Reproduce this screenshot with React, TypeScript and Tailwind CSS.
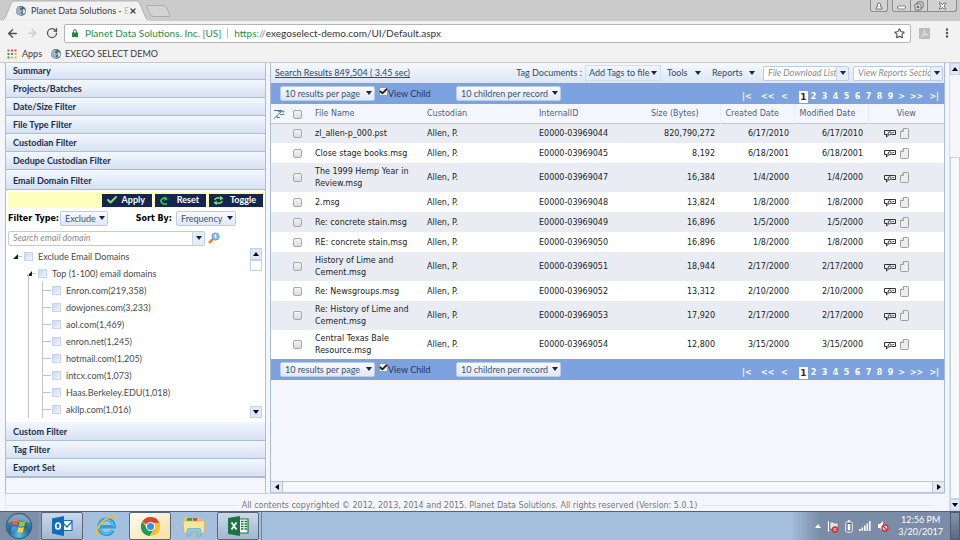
import * as React from "react"
import { ArrowLeft, ArrowRight, RotateCw, Star, X, Check, MoreVertical } from "lucide-react"
import { clsx } from "clsx"

const UI_FONT = "font-['Lato','Open_Sans',sans-serif]"
const GRID_FONT = "font-['DejaVu_Sans',sans-serif]"

const domains = [
  "Enron.com(219,358)",
  "dowjones.com(3,233)",
  "aol.com(1,469)",
  "enron.net(1,245)",
  "hotmail.com(1,205)",
  "intcx.com(1,073)",
  "Haas.Berkeley.EDU(1,018)",
  "akllp.com(1,016)",
]

const rows = [
  { name: "zl_allen-p_000.pst", id: "E0000-03969044", size: "820,790,272", date: "6/17/2010" },
  { name: "Close stage books.msg", id: "E0000-03969045", size: "8,192", date: "6/18/2001" },
  { name: "The 1999 Hemp Year in Review.msg", id: "E0000-03969047", size: "16,384", date: "1/4/2000", tall: true },
  { name: "2.msg", id: "E0000-03969048", size: "13,824", date: "1/8/2000" },
  { name: "Re: concrete stain.msg", id: "E0000-03969049", size: "16,896", date: "1/5/2000" },
  { name: "RE: concrete stain.msg", id: "E0000-03969050", size: "16,896", date: "1/8/2000" },
  { name: "History of Lime and Cement.msg", id: "E0000-03969051", size: "18,944", date: "2/17/2000", tall: true },
  { name: "Re: Newsgroups.msg", id: "E0000-03969052", size: "13,312", date: "2/10/2000" },
  { name: "Re: History of Lime and Cement.msg", id: "E0000-03969053", size: "17,920", date: "2/17/2000", tall: true },
  { name: "Central Texas Bale Resource.msg", id: "E0000-03969054", size: "12,800", date: "3/15/2000", tall: true },
]

function Caret({ className = "fill-[#14264f]" }: { className?: string }) {
  return (
    <svg viewBox="0 0 6 4" className={clsx("h-1 w-1.5 shrink-0", className)} aria-hidden="true">
      <path d="M0 0h6L3 4z" />
    </svg>
  )
}

function GlobeLogo() {
  return (
    <svg viewBox="0 0 12 12" className="h-3 w-3 shrink-0" aria-hidden="true">
      <circle cx="6" cy="6" r="5" fill="#4a6478" />
      <path d="M1 5c1-3 4-4 7-3-2 0-3 1-3 2s2 1 2 2-2 2-1 4C3 10 1 8 1 5z" fill="#9fb3c3" />
      <path d="M8 4c2 0 3 2 2 4-1 1-2 1-2 0s-1-2 0-4z" fill="#d4dee6" />
      <path d="M2 10c3 1 6 0 8-4" stroke="#eef3f7" strokeWidth=".7" fill="none" />
    </svg>
  )
}

function Select({ label, value, className }: { label: string; value: string; className: string }) {
  return (
    <div className={clsx("relative h-[15px] shrink-0", className)}>
      <select
        aria-label={label}
        className="block h-full w-full appearance-none rounded-[2px] border border-[#bccce3] bg-linear-to-b from-[#f8fafe] to-[#dfe8f6] pl-1 text-[9px] leading-3 text-[#3d5275]"
      >
        <option>{value}</option>
      </select>
      <Caret className="pointer-events-none absolute top-[5px] right-[3px] fill-[#14264f]" />
    </div>
  )
}

function Combo({ placeholder, className }: { placeholder: string; className: string }) {
  return (
    <div className={clsx("flex h-[15px] rounded-[2px] border border-[#bccce3] bg-white", className)}>
      <input
        type="text"
        aria-label={placeholder}
        placeholder={placeholder}
        className="min-w-0 flex-1 pl-1 text-[9px] italic placeholder:text-[#8e8e8e]"
      />
      <button
        type="button"
        aria-label={"Open " + placeholder}
        className="flex w-3 items-center justify-center border-l border-[#c8d6ea] bg-[#e6eef9]"
      >
        <Caret />
      </button>
    </div>
  )
}

function GridCheck({ label }: { label: string }) {
  return (
    <input
      type="checkbox"
      aria-label={label}
      className="block h-[9px] w-[9px] appearance-none rounded-[2px] border border-[#a9a9a9] bg-linear-to-b from-[#f4f4f4] to-[#dcdcdc]"
    />
  )
}

function BrowserChrome() {
  return (
    <header className={clsx("shrink-0", UI_FONT)}>
      <div className="flex h-[21px] items-start justify-between bg-[#cbcbcb]">
        <div className="flex h-full">
          <div className="relative h-full w-[150px]">
            <svg viewBox="0 0 150 21" className="absolute inset-0 h-full w-full" aria-hidden="true">
              <path d="M0 21C4 20 4 19 6 16L11 4q1-3 3-3H136q3 0 4 3l5 12q2 5 5 5z" fill="#f2f2f2" stroke="#a9a9a9" strokeWidth=".8" />
              <path d="M0 21h150" stroke="#f2f2f2" strokeWidth="1.5" />
            </svg>
            <div className="relative flex h-full items-center pl-[15px]">
              <GlobeLogo />
              <span className="ml-1 w-[94px] text-[9px] whitespace-nowrap text-[#3c3c3c]">
                Planet Data Solutions - <span className="text-[#bbb]">E</span>
              </span>
              <button type="button" aria-label="Close tab" className="ml-1">
                <X className="h-2 w-2 text-[#444]" strokeWidth={4} />
              </button>
            </div>
          </div>
          <button type="button" aria-label="New tab" className="-ml-1 h-full">
            <svg viewBox="0 0 26 21" className="h-[21px] w-[26px]" aria-hidden="true">
              <path d="M2 5.500h15.500q2 0 3 2l3.500 8q0 1-1 1H7q-2 0-3-2L1 7q0-1.500 1-1.500z" fill="#d3d3d3" stroke="#a2a2a2" strokeWidth=".8" />
            </svg>
          </button>
        </div>
        <div className="mr-[3px] flex h-3 gap-1">
          <button type="button" aria-label="Profile" className="flex w-[18px] items-center justify-center rounded-b-[3px] border border-t-0 border-[#8e8e8e] bg-[#d2d2d2]">
            <svg viewBox="0 0 8 8" className="h-2 w-2" fill="#fff" stroke="#555" strokeWidth=".8">
              <path d="M1 7V6q0-1.200 2-1.500Q2.300 4 2.300 2.800 2.500 1 4 1t1.700 1.800Q5.700 4 5 4.500 7 4.800 7 6v1z" />
            </svg>
          </button>
          <div className="flex rounded-b-[3px] border border-t-0 border-[#8e8e8e] bg-[#d2d2d2]">
            <button type="button" aria-label="Minimize" className="flex w-[17px] items-center justify-center">
              <svg viewBox="0 0 9 8" className="h-2 w-[9px]" fill="#fff" stroke="#666" strokeWidth=".8">
                <rect x=".5" y="4" width="8" height="3" rx="1" />
              </svg>
            </button>
            <button type="button" aria-label="Restore" className="flex w-[18px] items-center justify-center border-x border-[#8e8e8e]">
              <svg viewBox="0 0 10 10" className="h-2.5 w-2.5" fill="#eee" stroke="#555" strokeWidth=".9">
                <rect x="3" y="1" width="6" height="6" rx="1" />
                <rect x="1" y="3" width="6" height="6" rx="1" />
                <rect x="3.200" y="5.200" width="1.600" height="1.600" />
              </svg>
            </button>
            <button type="button" aria-label="Close window" className="flex w-7 items-center justify-center">
              <svg viewBox="0 0 9 8" className="h-2 w-[9px]" fill="#fff" stroke="#555" strokeWidth=".8">
                <path d="M1 1h2l1.500 1.700L6 1h2L6 4l2 3H6L4.500 5.300 3 7H1l2-3z" />
              </svg>
            </button>
          </div>
        </div>
      </div>

      <div className="flex h-6 items-center bg-[#f2f2f2] pr-[7px] pl-1.5">
        <button type="button" aria-label="Back" className="w-5">
          <ArrowLeft className="h-[13px] w-[13px] text-[#505050]" strokeWidth={2.5} />
        </button>
        <button type="button" aria-label="Forward" className="w-5">
          <ArrowRight className="h-3 w-3 text-[#c9c9c9]" strokeWidth={2.5} />
        </button>
        <button type="button" aria-label="Reload" className="w-[18px]">
          <RotateCw className="h-3 w-3 text-[#505050]" strokeWidth={2.5} />
        </button>
        <div className="flex h-[19px] min-w-0 flex-1 items-center rounded-[2px] border border-[#b5b5b5] bg-white pr-[5px] pl-[7px] text-[10px] whitespace-nowrap">
          <svg viewBox="0 0 6 8" className="h-2 w-1.5" role="img" aria-label="Secure">
            <path d="M1.500 4V2.300Q1.500.8 3 .8t1.500 1.500V4" fill="none" stroke="#1c8a3f" />
            <path d="M0 3.500h6V8H0z" fill="#1c8a3f" />
          </svg>
          <span className="ml-[7px] text-[#2c8a4b]">Planet Data Solutions. Inc. [US]</span>
          <span className="mx-1.5 h-2.5 w-px bg-[#bbb]" />
          <span className="text-[#2c8a4b]">https</span>
          <span className="text-[#888]">://</span>
          <input
            type="text"
            aria-label="Address"
            defaultValue="exegoselect-demo.com/UI/Default.aspx"
            className="min-w-0 flex-1 bg-transparent text-[#333]"
          />
          <button type="button" aria-label="Bookmark this page">
            <Star className="h-[11px] w-[11px] text-[#555]" strokeWidth={2.5} />
          </button>
        </div>
        <button type="button" aria-label="PDF extension" className="ml-2 flex h-[11px] w-[11px] items-center justify-center bg-[#bdbdbd]">
          <svg viewBox="0 0 10 10" className="h-[9px] w-[9px]" fill="none" stroke="#e9e9e9" strokeWidth="1">
            <path d="M1.500 8.500C4 6.500 5 4 4.800 1.500 5 5 7 6.500 9 6.500 6 6 4 6.500 1.500 8.500z" />
          </svg>
        </button>
        <button type="button" aria-label="Menu" className="ml-[11px]">
          <MoreVertical className="h-3 w-3 text-[#505050]" strokeWidth={3} />
        </button>
      </div>

      <nav className="flex h-[18px] items-center border-b border-[#c4c7cc] bg-[#f2f2f2] pl-[7px] text-[9px] text-[#3a3a3a]">
        <svg viewBox="0 0 10 10" className="h-2.5 w-2.5" aria-hidden="true">
          <path d="M.5.500h2v2h-2zM4 .5h2v2H4zM7.500.500h2v2h-2z" fill="#e5483b" />
          <path d="M.5 4h2v2h-2z" fill="#28a058" />
          <path d="M4 4h2v2H4z" fill="#3f7ee8" />
          <path d="M7.500 4h2v2h-2zM4 7.500h2v2H4zM7.500 7.500h2v2h-2z" fill="#f3b81d" />
          <path d="M.5 7.500h2v2h-2z" fill="#28a058" />
        </svg>
        <a href="#apps" className="ml-[5px]">Apps</a>
        <a href="#exego" className="ml-2 flex items-center gap-[3px]">
          <GlobeLogo />
          EXEGO SELECT DEMO
        </a>
      </nav>
    </header>
  )
}

function PanelHeader({ title, className = "h-[18px]" }: { title: string; className?: string }) {
  return (
    <button
      type="button"
      className={clsx(
        "block w-full border-b border-[#a9bddb] bg-linear-to-b from-[#f3f8fe] to-[#d6e1f2] pl-[7px] text-left text-[9px] leading-4 font-bold text-[#1b2c4f]",
        className
      )}
    >
      {title}
    </button>
  )
}

function ActionButton({ label, children, className }: { label: string; children: React.ReactNode; className: string }) {
  return (
    <button type="button" className={clsx("flex h-[13px] items-center justify-between bg-[#14264f] pr-[7px] pl-1 text-[9px] font-bold text-white", className)}>
      {children}
      {label}
    </button>
  )
}

function TreeItem({ label, level }: { label: string; level: number }) {
  const leaf = level === 2
  return (
    <li className={clsx("flex h-[17px] items-center", leaf ? "ml-7" : level === 1 ? "ml-3.5" : "ml-0")}>
      {leaf ? (
        <span className="h-[17px] w-2.5 border-l border-[#c3c3c3] pt-2">
          <span className="block h-px w-2 bg-[#c3c3c3]" />
        </span>
      ) : (
        <span className="flex w-2.5 items-center">
          <svg viewBox="0 0 5 5" className="-ml-px h-[5px] w-[5px]" aria-hidden="true">
            <path d="M5 0v5H0z" fill="#222" />
          </svg>
          <span className="h-px w-1 bg-[#c3c3c3]" />
        </span>
      )}
      <label className="flex items-center gap-[5px] text-[9px] whitespace-nowrap text-[#4b4b4b]">
        <input type="checkbox" className="h-[9px] w-[9px] appearance-none border border-[#c5d5ea] bg-linear-to-br from-[#c9d9ee] to-[#f1f6fc]" />
        {label}
      </label>
    </li>
  )
}

function FilterSidebar() {
  return (
    <aside className={clsx("flex w-[261px] shrink-0 flex-col border-x border-[#a9bddb]", UI_FONT)}>
      <PanelHeader title="Summary" className="h-[17px]" />
      <PanelHeader title="Projects/Batches" />
      <PanelHeader title="Date/Size Filter" />
      <PanelHeader title="File Type Filter" />
      <PanelHeader title="Custodian Filter" />
      <PanelHeader title="Dedupe Custodian Filter" />
      <PanelHeader title="Email Domain Filter" className="h-5 pt-0.5" />
      <div className="bg-white px-0.5 pt-0.5 pb-1">
        <div className="flex h-4 items-center justify-end gap-[3px] bg-[#ffffbd]">
          <ActionButton label="Apply" className="w-[50px]">
            <Check className="h-3 w-3 text-[#7dea4c]" strokeWidth={4} />
          </ActionButton>
          <ActionButton label="Reset" className="w-[51px]">
            <svg viewBox="0 0 12 12" className="h-2.5 w-2.5" fill="none" stroke="#27d33a" strokeWidth="2">
              <path d="M9.500 10.500C4 12 1 8 3 5.500 4.500 3.500 7 3.500 9 4.500" />
              <path d="M7 1.500l3.500 3.200L6.500 7z" fill="#27d33a" stroke="none" />
            </svg>
          </ActionButton>
          <ActionButton label="Toggle" className="w-[54px]">
            <svg viewBox="0 0 12 12" className="h-[11px] w-[11px]" fill="none" stroke="#6fe65a" strokeWidth="1.600">
              <path d="M2 5.500C2.500 3 5 2.500 9 3.500M10 6.500C9.500 9 7 9.500 3 8.500" />
              <path d="M8 .8l3.500 3L7.500 6zM4 6L.5 8.500 4 11.200z" fill="#6fe65a" stroke="none" />
            </svg>
          </ActionButton>
        </div>
        <div className={clsx("flex h-[21px] items-center text-[8px] font-bold text-black", GRID_FONT)}>
          <span className="w-[52px] whitespace-nowrap">Filter Type:</span>
          <Select label="Filter type" value="Exclude" className={clsx("w-12 font-normal", UI_FONT)} />
          <span className="w-[68px] pr-1 text-right whitespace-nowrap">Sort By:</span>
          <Select label="Sort by" value="Frequency" className={clsx("w-[60px] font-normal", UI_FONT)} />
        </div>
        <div className="flex h-[18px] items-center gap-[3px]">
          <Combo placeholder="Search email domain" className="w-[197px]" />
          <button type="button" aria-label="Search domains">
            <svg viewBox="0 0 12 12" className="h-3 w-3">
              <path d="M1 11l4-4" stroke="#e8862a" strokeWidth="2.500" />
              <circle cx="7.500" cy="4.500" r="3.600" fill="#8fc4ea" stroke="#4a8dc4" strokeWidth=".8" />
              <path d="M7.500 3v3M6.500 3.500l1-1" stroke="#fff" />
            </svg>
          </button>
        </div>
        <div className="flex justify-between pt-px">
          <div className="relative pl-1.5">
            <span className="absolute top-[26px] bottom-0 left-5 w-px bg-[#c3c3c3]" />
            <ul>
              <TreeItem label="Exclude Email Domains" level={0} />
              <TreeItem label="Top (1-100) email domains" level={1} />
              {domains.map((d) => (
                <TreeItem key={d} label={d} level={2} />
              ))}
            </ul>
          </div>
          <div className="mr-px flex w-3 flex-col items-stretch">
            <button type="button" aria-label="Scroll up" className="flex h-3 items-center justify-center border border-[#c3d3e9] bg-[#dfe8f6]">
              <Caret className="rotate-180 fill-black" />
            </button>
            <span className="h-[11px] border border-[#c3d3e9] bg-white" />
            <button type="button" aria-label="Scroll down" className="mt-auto flex h-3 items-center justify-center border border-[#c3d3e9] bg-[#dfe8f6]">
              <Caret className="fill-black" />
            </button>
          </div>
        </div>
      </div>
      <PanelHeader title="Custom Filter" className="h-[19px] pt-px" />
      <PanelHeader title="Tag Filter" />
      <PanelHeader title="Export Set" className="h-[19px] border-b-2" />
    </aside>
  )
}

function PagerBar({ place }: { place: string }) {
  return (
    <div className="flex h-[21px] items-center justify-between bg-[#7da2e0] pr-[5px] pl-[9px]">
      <div className={clsx("flex items-center", UI_FONT)}>
        <Select label={"Results per page " + place} value="10 results per page" className="w-[95px]" />
        <label className="ml-1 flex items-center text-[9px] text-[#23375f]">
          <span className="relative mb-1 h-[9px] w-[9px]">
            <input type="checkbox" defaultChecked className="block h-[9px] w-[9px] appearance-none border border-[#9a9a9a] bg-[#f2f2f2]" />
            <Check className="pointer-events-none absolute inset-0 h-[9px] w-[9px] text-[#222]" strokeWidth={5} />
          </span>
          <span className="w-10 whitespace-nowrap">View Child</span>
        </label>
        <Select label={"Children per record " + place} value="10 children per record" className="ml-7 w-[105px]" />
      </div>
      <nav aria-label={"Pages " + place} className={clsx("flex items-center pt-1.5 text-[8px] leading-3 font-bold text-white", GRID_FONT)}>
        <button type="button" className="w-[19px] text-left">|&lt;</button>
        <button type="button" className="w-5 text-left">&lt;&lt;</button>
        <button type="button" className="w-[18px] text-left">&lt;</button>
        <button type="button" aria-current="page" className="w-[9px] bg-white text-[9px] text-[#5b1a1a]">1</button>
        {[2, 3, 4, 5, 6, 7, 8, 9].map((n) => (
          <button key={n} type="button" className="w-[11px]">{n}</button>
        ))}
        <button type="button" className="w-[11px]">&gt;</button>
        <button type="button" className="w-[19px]">&gt;&gt;</button>
        <button type="button" className="w-[13px] text-right">&gt;|</button>
      </nav>
    </div>
  )
}

function ResultsTable() {
  return (
    <table className={clsx("w-full table-fixed border-collapse bg-white text-[8px] leading-3 text-[#222]", GRID_FONT)}>
      <colgroup>
        <col className="w-4" />
        <col className="w-[22px]" />
        <col className="w-28" />
        <col className="w-28" />
        <col className="w-28" />
        <col className="w-[75px]" />
        <col className="w-[74px]" />
        <col className="w-[74px]" />
        <col />
      </colgroup>
      <thead>
        <tr className="h-[19px] border-b border-[#b9cade] bg-[#f3f7fd] text-left text-[#4c6185] [&>th]:pt-0.5 [&>th]:font-normal">
          <th className="pl-0.5">
            <svg viewBox="0 0 12 10" className="h-2.5 w-3" fill="none" role="img" aria-label="Clear filter">
              <path d="M1 1.500h8" stroke="#5a6b85" />
              <path d="M5 2.500h6.500" stroke="#2aa3e4" strokeWidth="1.600" />
              <path d="M1 9.500L8 3M7 5.500h4M4 6.500v2h3" stroke="#5a6b85" strokeWidth=".9" />
            </svg>
          </th>
          <th className="pl-1.5"><GridCheck label="Select all" /></th>
          <th className="pl-1.5">File Name</th>
          <th className="pl-1.5">Custodian</th>
          <th className="pl-1.5">InternalID</th>
          <th className="pl-1.5">Size (Bytes)</th>
          <th className="border-l border-[#e7edf6] pl-[5px]">Created Date</th>
          <th className="border-l border-[#e7edf6] pl-[5px]">Modified Date</th>
          <th className="border-l border-[#e7edf6] text-center">View</th>
        </tr>
      </thead>
      <tbody>
        {rows.map((row) => (
          <tr key={row.id} className={clsx("odd:bg-[#e9edf3]", row.tall ? "h-[29px]" : "h-5")}>
            <td />
            <td className="pl-1.5"><GridCheck label={"Select " + row.name} /></td>
            <td className="pt-px pr-2 pl-1.5">{row.name}</td>
            <td className="pt-px pl-1.5">Allen, P.</td>
            <td className="pt-px pl-1.5">{row.id}</td>
            <td className="pt-px pr-[5px] text-right">{row.size}</td>
            <td className="pt-px pr-[5px] text-right">{row.date}</td>
            <td className="pt-px pr-[5px] text-right">{row.date}</td>
            <td className="pl-4">
              <div className="flex items-center gap-1">
                <button type="button" aria-label="View metadata">
                  <svg viewBox="0 0 12 10" className="block h-2.5 w-3" fill="none" stroke="#333" strokeWidth="1">
                    <path d="M3.500 6.500H.5v-4h11v4H7.500" />
                    <path d="M2.500 6.500v2.500L4.800 6.800" />
                    <circle cx="5.700" cy="5.300" r="1.500" fill="#fff" />
                    <path d="M8.500 4.500h1.300" />
                  </svg>
                </button>
                <button type="button" aria-label="View document">
                  <svg viewBox="0 0 9 11" className="block h-[11px] w-[9px]" fill="#ededed" stroke="#8a8a8a" strokeWidth=".8">
                    <path d="M3.500.5H7.500q1 0 1 1v8q0 1-1 1h-6q-1 0-1-1V3.500z" />
                    <path d="M3.500.500v3h-3" fill="#fff" />
                  </svg>
                </button>
              </div>
            </td>
          </tr>
        ))}
      </tbody>
    </table>
  )
}

function ResultsPanel() {
  return (
    <main className="flex min-w-0 flex-1 flex-col border-x border-[#a9bddb]">
      <div className={clsx("flex h-5 shrink-0 items-center bg-linear-to-b from-[#f6f9fe] to-[#dbe6f5] pr-px pl-1 text-[9px] whitespace-nowrap text-[#33486d]", UI_FONT)}>
        <a href="#results" className="underline">Search Results 849,504 ( 3.45 sec)</a>
        <div className="ml-auto flex items-center">
          <span className="mr-[3px]">Tag Documents :</span>
          <button type="button" className="flex h-4 w-[76px] items-center justify-between border border-[#d3deed] px-[3px]">Add Tags to file <Caret /></button>
          <button type="button" className="ml-1.5 flex w-[34px] items-center justify-between">Tools <Caret /></button>
          <button type="button" className="mr-2 ml-[11px] flex w-[43px] items-center justify-between">Reports <Caret /></button>
          <Combo placeholder="File Download List" className="mr-1 w-[86px]" />
          <Combo placeholder="View Reports Section" className="w-[90px]" />
        </div>
      </div>
      <PagerBar place="top" />
      <ResultsTable />
      <PagerBar place="bottom" />
      <div className="mt-auto flex h-3 shrink-0 items-stretch justify-between border-y border-[#b5c6de] bg-[#f5f8fd]">
        <button type="button" aria-label="Scroll left" className="flex w-3 items-center justify-center border-r border-[#b5c6de] bg-[#e3ebf7]">
          <Caret className="rotate-90 fill-black" />
        </button>
        <button type="button" aria-label="Scroll right" className="flex w-3 items-center justify-center border-l border-[#b5c6de] bg-[#e3ebf7]">
          <Caret className="-rotate-90 fill-black" />
        </button>
      </div>
    </main>
  )
}

function TaskButton({ label, active, children }: { label: string; active?: boolean; children: React.ReactNode }) {
  return (
    <button
      type="button"
      aria-label={label}
      className={clsx(
        "flex h-7 w-[42px] items-center justify-center rounded-[2px] border border-[#56677f]",
        active ? "bg-linear-to-br from-[#fffdf2] to-[#f3dfa6]" : "bg-linear-to-b from-[#cbd8e8] to-[#a3b7d0]"
      )}
    >
      {children}
    </button>
  )
}

function Taskbar() {
  return (
    <footer className={clsx("flex h-[29px] shrink-0 items-center justify-between border-t border-[#56606e] bg-[#a5bfde]", UI_FONT)}>
      <div className="flex h-full items-center bg-linear-to-r from-[#7d8ea8] from-[14%] to-[#a5bfde] to-[20%]">
        <button type="button" aria-label="Start" className="mr-2 ml-[5px]">
          <svg viewBox="0 0 28 28" className="h-7 w-7">
            <defs>
              <radialGradient id="orb" cx=".5" cy=".85" r=".8">
                <stop offset="0" stopColor="#58c6ea" />
                <stop offset=".5" stopColor="#246796" />
                <stop offset="1" stopColor="#6d8fae" />
              </radialGradient>
            </defs>
            <circle cx="14" cy="14" r="12.800" fill="url(#orb)" stroke="#2d4f70" strokeWidth=".8" />
            <path d="M8 8.500q3-1.500 5.500 0l-1 5q-2.500-1.500-5.500 0z" fill="#ee6035" />
            <path d="M14.500 9q3 1.500 6 0l-1.200 5q-3 1.500-5.800 0z" fill="#93c83e" />
            <path d="M6.800 14.500q3-1.500 5.500 0l-1 5q-2.500-1.500-5.500 0z" fill="#3d9be0" />
            <path d="M13.300 15q3 1.500 5.800 0l-1.200 5q-3 1.500-5.600 0z" fill="#fbd032" />
            <path d="M3 11a11.500 11.500 0 0 1 22 0q-11-5-22 0z" fill="#fff" opacity=".25" />
          </svg>
        </button>
        <TaskButton label="Outlook">
          <svg viewBox="0 0 22 22" className="h-[22px] w-[22px]">
            <path d="M11 5.500h10v10H11z" fill="#fff" stroke="#1670c0" strokeWidth="1.200" />
            <path d="M12 8l4 4 5-5.500" fill="none" stroke="#1670c0" strokeWidth="1.400" />
            <path d="M1 3.500L13 1v20L1 18.500z" fill="#0f6dbd" />
            <ellipse cx="7" cy="11" rx="2.300" ry="3" fill="none" stroke="#fff" strokeWidth="1.700" />
          </svg>
        </TaskButton>
        <button type="button" aria-label="Internet Explorer" className="mx-[11px]">
          <svg viewBox="0 0 24 24" className="h-6 w-6" fill="none">
            <path d="M19 16.500a7.500 7.500 0 1 1 1-3.800H6" stroke="#2c9fdc" strokeWidth="3.600" />
            <path d="M18.600 16a7 7 0 1 1 .8-3.600" stroke="#7fd2f4" strokeWidth="1" />
            <path d="M3.500 21.500C-1 19 6 8 14 3.800c5-2.600 8-2.300 7 1.700" stroke="#f1bf2c" strokeWidth="1.800" />
          </svg>
        </button>
        <TaskButton label="Chrome" active>
          <svg viewBox="0 0 22 22" className="h-[21px] w-[21px]">
            <circle cx="11" cy="11" r="10" fill="#fbc116" />
            <path d="M11 11L2.300 6A10 10 0 0 1 20.200 7H11z" fill="#dc4437" />
            <path d="M2.300 6a10 10 0 0 0 7.700 15l4.600-8L7 12.500z" fill="#1b9c57" />
            <circle cx="11" cy="11" r="4.800" fill="#fff" />
            <circle cx="11" cy="11" r="3.700" fill="#4586ef" />
          </svg>
        </TaskButton>
        <button type="button" aria-label="File Explorer" className="mx-[11px]">
          <svg viewBox="0 0 24 24" className="h-6 w-6">
            <path d="M2 3h6l1 2h12q1 0 1 1v13H2z" fill="#e6c466" />
            <path d="M5 4h5v3H5z" fill="#35a345" />
            <path d="M11 4h4v3h-4z" fill="#de4a34" />
            <path d="M1 7h21.500l-.5 12H2z" fill="#f9e7a0" stroke="#d0ab4e" strokeWidth=".6" />
            <path d="M5 22v-6q0-1.500 1.500-1.500h11q1.500 0 1.500 1.500v6h-3.500v-4h-7v4z" fill="#8fc9ec" stroke="#5d9dc8" strokeWidth=".6" />
          </svg>
        </button>
        <TaskButton label="Excel">
          <svg viewBox="0 0 22 22" className="h-[22px] w-[22px]">
            <path d="M11 4h10v14H11z" fill="#fff" stroke="#1c7344" strokeWidth="1.200" />
            <path d="M14 6.500h2.500M17.500 6.500H20M14 9h2.500M17.500 9H20M14 11.500h2.500M17.500 11.500H20M14 14h2.500M17.500 14H20" stroke="#1c7344" strokeWidth="1.300" />
            <path d="M1 3L13 1v20L1 19z" fill="#1c7344" />
            <path d="M4.500 7.500l5 7M9.500 7.500l-5 7" stroke="#fff" strokeWidth="1.800" />
          </svg>
        </TaskButton>
        <span className="h-7 w-[3px] border-r border-[#6f819b]" />
      </div>

      <div className="flex h-full w-[170px] items-center justify-end bg-linear-to-r from-[#a5bfde] to-[#7a8ca8] to-[18%]">
        <div className="mr-[9px] flex items-center gap-1.5">
          <svg viewBox="0 0 6 4" className="h-1 w-1.5" fill="#fff"><path d="M0 4l3-4 3 4z" /></svg>
          <svg viewBox="0 0 12 13" className="h-[13px] w-3">
            <path d="M1.500 1v11" stroke="#fff" strokeWidth="1.200" />
            <path d="M3 2h3l1 1h4v6H3z" fill="#dfe5ec" stroke="#4c5a6c" strokeWidth=".5" />
            <circle cx="8" cy="9.500" r="3.200" fill="#d92d26" />
            <path d="M6.700 8.200l2.600 2.600M9.300 8.200l-2.600 2.600" stroke="#fff" />
          </svg>
          <svg viewBox="0 0 8 13" className="h-[13px] w-2" fill="none">
            <rect x=".8" y="2" width="6.400" height="10.200" rx="1.500" fill="#5b6673" stroke="#fff" />
            <path d="M2.800 1h2.400" stroke="#fff" strokeWidth="1.500" />
            <path d="M2.600 4h2.800v6.500H2.600z" fill="#fff" />
          </svg>
          <svg viewBox="0 0 12 10" className="h-2.5 w-3" fill="#fff">
            <path d="M0 8h1.600v2H0zM2.500 6.500h1.600V10H2.500zM5 4.500h1.600V10H5zM7.500 2.500h1.600V10H7.500zM10 0h1.600v10H10z" />
          </svg>
          <svg viewBox="0 0 12 12" className="h-3 w-3">
            <path d="M1 4h2l3-3v10L3 8H1z" fill="#fff" />
            <circle cx="8" cy="8" r="3" fill="#fff" stroke="#d92d26" strokeWidth="1.400" />
            <path d="M6 6l4 4" stroke="#d92d26" strokeWidth="1.400" />
          </svg>
        </div>
        <time className="mr-[7px] text-center text-[9px] leading-3 text-white">
          12:56 PM
          <br />
          3/20/2017
        </time>
        <button type="button" aria-label="Show desktop" className="h-full w-2.5 border border-[#4f5d70] bg-linear-to-b from-[#8393a8] to-[#5c6b80]" />
      </div>
    </footer>
  )
}

export default function App() {
  return (
    <div className="flex h-screen w-full flex-col overflow-hidden bg-[#f4f6fb]">
      <BrowserChrome />
      <div className="flex min-h-0 flex-1">
        <div className="flex min-w-0 flex-1 flex-col pr-1 pl-[5px]">
          <div className="flex min-h-0 flex-1 gap-1 border-b border-[#c5d2e4]">
            <FilterSidebar />
            <ResultsPanel />
          </div>
          <div className={clsx("flex h-[17px] shrink-0 items-center gap-1 border-l border-[#e3e8f0] pt-1.5 pr-3 text-[8px] leading-[11px] text-[#777]", GRID_FONT)}>
            <span className="h-px flex-1 bg-[#e3e8f0]" />
            <p>All contents copyrighted © 2012, 2013, 2014 and 2015. Planet Data Solutions. All rights reserved (Version: 5.0.1)</p>
            <span className="h-px flex-1 bg-[#e3e8f0]" />
          </div>
        </div>
        <div className="flex w-[11px] flex-col border-l border-[#d3deed]">
          <button type="button" aria-label="Page up" className="flex h-3 items-center justify-center border border-[#c3d3e9] bg-[#dfe8f6]">
            <Caret className="rotate-180 fill-black" />
          </button>
          <span className="mt-[82px] flex-1 border border-[#c3d3e9] bg-[#f7f9fc]" />
          <button type="button" aria-label="Page down" className="flex h-3 items-center justify-center border border-[#c3d3e9] bg-[#dfe8f6]">
            <Caret className="fill-black" />
          </button>
        </div>
      </div>
      <Taskbar />
    </div>
  )
}
